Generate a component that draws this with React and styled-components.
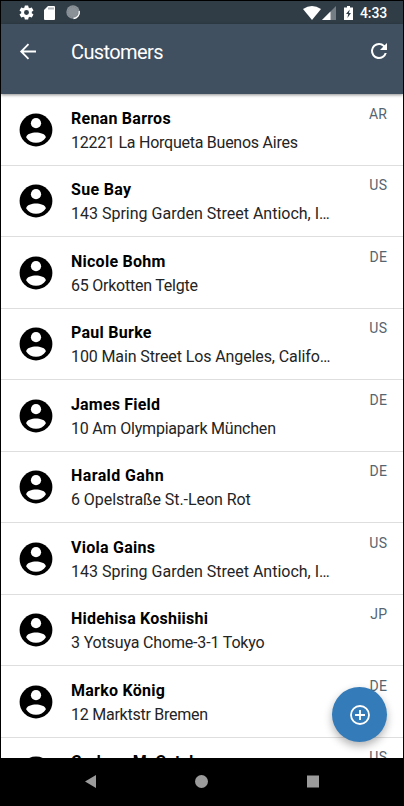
import React from 'react';
import styled, { createGlobalStyle } from 'styled-components';

const Global = createGlobalStyle`
  *{box-sizing:border-box}
  body{margin:0;background:#000;font-family:Roboto,"Noto Sans",sans-serif}
`;
const Phone = styled.div`
  width:404px;height:806px;padding:1px;background:#000;display:flex;flex-direction:column;overflow:hidden;
`;
const StatusBar = styled.div`
  flex:none;height:23px;background:#303d47;display:flex;justify-content:space-between;
  padding:0 16px 0 17px;svg{display:block}
`;
const StatusGroup = styled.div`display:flex;align-items:center;`;
const StatusIcon = styled.svg`flex:none;margin-left:${p => p.$gap || 0}px;`;
const Clock = styled.span`
  font-size:14px;font-weight:500;line-height:23px;color:#fff;margin-left:7px;width:27px;white-space:nowrap;padding-top:1px;letter-spacing:-.1px;
`;
const AppBar = styled.header`
  flex:none;height:70px;background:#415060;display:flex;align-items:flex-start;padding:15px 12px 0 15px;
  box-shadow:0 1px 3px rgba(0,0,0,.45);position:relative;z-index:1;
`;
const Title = styled.h1`
  flex:1;margin:0 0 0 31px;font-size:20px;line-height:26px;font-weight:400;color:#fff;letter-spacing:-.6px;
`;
const List = styled.main`flex:none;height:664px;overflow:hidden;background:#fff;position:relative;`;
const Row = styled.div`
  height:71.5px;display:flex;border-bottom:1.3px solid #dedede;padding:0 16px 0 18px;
  > svg{flex:none;margin-top:18.6px}
`;
const Info = styled.div`flex:1;min-width:0;margin-left:18px;padding-top:12.6px;white-space:nowrap;`;
const Name = styled.div`font-size:16px;line-height:24px;font-weight:700;color:#000;letter-spacing:${p => p.$ls || 0}px;`;
const Address = styled.div`font-size:16px;line-height:24px;color:#242424;letter-spacing:${p => p.$ls || 0}px;`;
const Country = styled.div`font-size:14px;line-height:18px;color:#56646f;padding-top:10.8px;letter-spacing:.3px;margin-right:-.3px;`;
const Fab = styled.button`
  position:absolute;right:16px;top:593px;width:55px;height:55px;border:0;border-radius:50%;padding:0;
  background:#347bb9;display:flex;align-items:center;justify-content:center;box-shadow:0 4px 8px rgba(0,0,0,.3);
`;
const NavBar = styled.nav`flex:1;background:#000;svg{display:block}`;

const rows = [
  ['Renan Barros', '12221 La Horqueta Buenos Aires', 'AR', .25, -.25],
  ['Sue Bay', '143 Spring Garden Street Antioch, I…', 'US', .3, 0],
  ['Nicole Bohm', '65 Orkotten Telgte', 'DE', .25, -.23],
  ['Paul Burke', '100 Main Street Los Angeles, Califo…', 'US', .27, -.11],
  ['James Field', '10 Am Olympiapark München', 'DE', .18, -.2],
  ['Harald Gahn', '6 Opelstraße St.-Leon Rot', 'DE', .4, -.06],
  ['Viola Gains', '143 Spring Garden Street Antioch, I…', 'US', .25, 0],
  ['Hidehisa Koshiishi', '3 Yotsuya Chome-3-1 Tokyo', 'JP', .22, -.16],
  ['Marko König', '12 Marktstr Bremen', 'DE', .25, -.25],
  ['Graham McCatch', '', 'US', .2, 0],
];

const Avatar = () => (
  <svg width="34" height="34" viewBox="0 0 34 34">
    <circle cx="17" cy="17" r="16.400" />
    <circle cx="17" cy="10.200" r="5.100" fill="#fff" />
    <path fill="#fff" d="M7.200 24.400C7.200 21.100 13 19.600 17 19.600S26.800 21.100 26.800 24.400C24.700 27.800 21 29.700 17 29.700S9.300 27.800 7.200 24.400z" />
  </svg>
);

export default function App() {
  return (
    <Phone>
      <Global />
      <StatusBar>
        <StatusGroup>
          <StatusIcon width="17" height="17" viewBox="0 0 24 24" fill="#fff"><path d="M19.430 12.980c.040-.320.070-.640.070-.980s-.030-.660-.070-.980l2.110-1.650a.5.5 0 0 0 .12-.64l-2-3.460a.5.5 0 0 0-.61-.22l-2.490 1a7.300 7.300 0 0 0-1.690-.98l-.38-2.650A.49.49 0 0 0 14 2h-4a.49.49 0 0 0-.49.42l-.38 2.650a7.700 7.700 0 0 0-1.690.98l-2.490-1a.49.49 0 0 0-.61.22l-2 3.460a.49.49 0 0 0 .12.64l2.110 1.650a7.900 7.900 0 0 0 0 1.960l-2.110 1.650a.5.5 0 0 0-.12.64l2 3.460a.5.5 0 0 0 .61.22l2.490-1c.52.4 1.080.73 1.690.98l.38 2.650c.03.24.24.42.49.42h4c.25 0 .46-.18.49-.42l.38-2.650a7.700 7.700 0 0 0 1.690-.98l2.490 1c.23.09.49 0 .61-.22l2-3.460a.5.5 0 0 0-.12-.64zM12 15.500a3.500 3.500 0 1 1 0-7 3.500 3.500 0 0 1 0 7z" /></StatusIcon>
          <StatusIcon $gap={9} width="11" height="14" viewBox="0 0 11 14"><path d="M4 0h6q1 0 1 1v12q0 1-1 1H1q-1 0-1-1V4z" fill="#fff" /><path d="M5 1.500v2M7 1.500v2M9 1.500v2" stroke="#66717a" /></StatusIcon>
          <StatusIcon $gap={11} width="15" height="15" viewBox="0 0 15 15"><circle cx="7" cy="7" r="6.700" fill="#8b9297" /><circle cx="7" cy="7" r="5.200" fill="none" stroke="#79848b" strokeDasharray="1 1" /><path d="M13.200 6A6.300 6.300 0 0 1 7.500 13.500" fill="none" stroke="#fff" strokeWidth="1.300" /></StatusIcon>
        </StatusGroup>
        <StatusGroup>
          <StatusIcon width="18" height="14" viewBox="0 0 18 14"><path d="M0 3Q9-3 18 3L9 14z" fill="#fff" /></StatusIcon>
          <StatusIcon $gap={1} width="14" height="14" viewBox="0 0 14 14"><path d="M14 0v14H0z" fill="#747d84" /><path d="M8.500 5.500V14H0z" fill="#fff" /></StatusIcon>
          <StatusIcon $gap={8} width="9" height="14" viewBox="0 0 9 14"><path d="M3 0h3v1.500h3V14H0V1.500h3z" fill="#fff" /><path d="M5.700 3.500L2 8h2.200l-.8 4L7 7H5z" fill="#303d47" /></StatusIcon>
          <Clock>4:33</Clock>
        </StatusGroup>
      </StatusBar>
      <AppBar>
        <svg width="24" height="24" viewBox="0 0 24 24" fill="none" stroke="#fff" strokeWidth="1.800"><path d="M20 12.500H6M12.500 5.200L5.200 12.500l7.300 7.300" /></svg>
        <Title>Customers</Title>
        <svg width="24" height="24" viewBox="0 0 24 24"><path fill="#fff" d="M17.650 6.350A7.960 7.960 0 0 0 12 4a8 8 0 1 0 7.730 10h-2.080A6 6 0 1 1 12 6c1.660 0 3.140.69 4.220 1.780L13 11h7V4z" /></svg>
      </AppBar>
      <List>
        {rows.map(([name, address, country, nls, als]) => (
          <Row key={name}>
            <Avatar />
            <Info><Name $ls={nls}>{name}</Name><Address $ls={als}>{address}</Address></Info>
            <Country>{country}</Country>
          </Row>
        ))}
        <Fab aria-label="Add">
          <svg width="22" height="22" viewBox="0 0 22 22" fill="none" stroke="#fff" strokeWidth="1.800"><circle cx="11" cy="11" r="9" /><path d="M11 6v10M6 11h10" /></svg>
        </Fab>
      </List>
      <NavBar>
        <svg width="402" height="47" viewBox="0 0 402 47" fill="#9b9b9b"><path d="M84 23.500L95 17v13z" /><circle cx="200.500" cy="23.500" r="6.500" /><rect x="306" y="17.500" width="12" height="12" /></svg>
      </NavBar>
    </Phone>
  );
}
